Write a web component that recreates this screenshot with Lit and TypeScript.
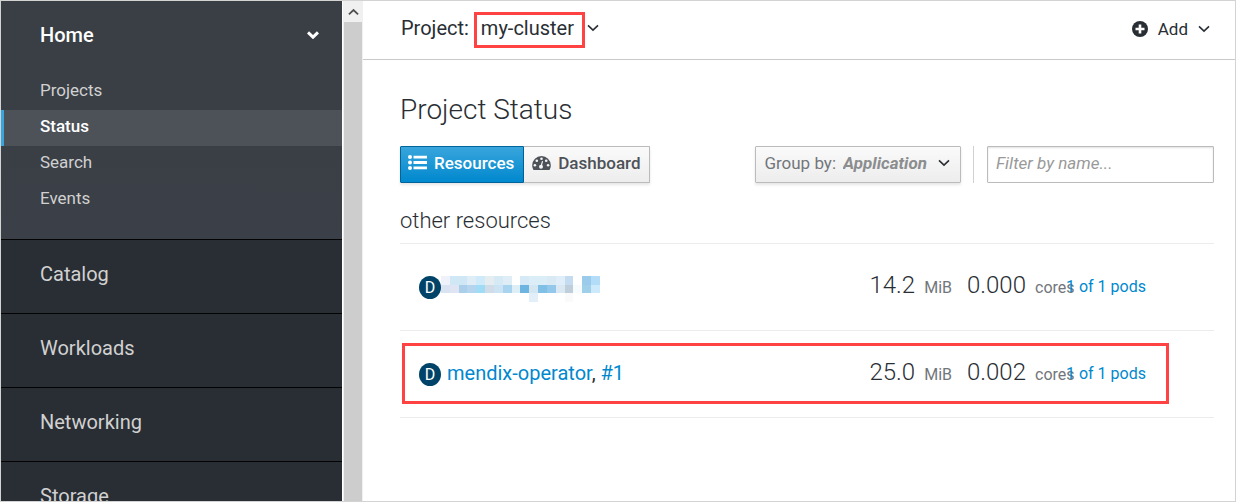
import { LitElement, html, svg, css, nothing } from "lit";
import { customElement, property } from "lit/decorators.js";

const chevron = (cls = "") => html`
  <svg class="chev ${cls}" viewBox="0 0 12 8" aria-hidden="true">
    <path d="M1 1.4 6 6.2 11 1.4" fill="none" stroke="currentColor" />
  </svg>
`;

interface Deployment {
  name: string | null;
  version: string;
  memory: string;
  cores: string;
  highlighted: boolean;
}

const deployments: Deployment[] = [
  { name: null, version: "", memory: "14.2", cores: "0.000", highlighted: false },
  { name: "mendix-operator", version: "#1", memory: "25.0", cores: "0.002", highlighted: true },
];

const mosaicEdges = [0, 9, 18, 26, 35, 44, 53, 62, 71, 79, 88, 97, 106, 115, 124, 132, 141, 150, 159];
const mosaicRows: { y: number; h: number; colors: string[] }[] = [
  {
    y: 0,
    h: 9,
    colors: [
      "#eff2fa", "#d0e8f5", "#d0e8f5", "#dfedf6", "#cfeaf8", "#e5edf0", "#d6eaf6", "#dfedf7", "",
      "#d5e9f7", "#dbeef8", "#dbeef8", "#d9eaf5", "#dfeef8", "#c4dbf0", "", "#9bcbeb", "#b3dcf8",
    ],
  },
  {
    y: 9,
    h: 8,
    colors: [
      "#dae3f2", "#e0e5f4", "#abcfe8", "#b5d5ee", "#a0dcf5", "#d0dce8", "#cbe3f2", "#a9d4ef", "#deeef7",
      "#6db5e0", "#d4e6f1", "#80c0e7", "#93c8ea", "#dae8f3", "#c0cedb", "#f6fbfe", "#a0cfea", "#cde9fc",
    ],
  },
  {
    y: 17,
    h: 9,
    colors: ["", "", "", "", "", "", "", "", "", "", "#e2eff9", "", "", "", "#fafafa", "", "", ""],
  },
];

@customElement("side-nav")
export class SideNav extends LitElement {
  static styles = css`
    :host {
      display: flex;
      min-height: 0;
      overflow: hidden;
      font-family: Roboto, "Liberation Sans", sans-serif;
    }
    .nav {
      flex: 1;
      background: #292e34;
      color: #d1d1d1;
    }
    .group {
      border-bottom: 1px solid #030303;
    }
    .group.open {
      background: linear-gradient(#393f44, #3b3f47);
      padding-bottom: 21px;
    }
    .head {
      display: flex;
      align-items: center;
      justify-content: space-between;
      box-sizing: border-box;
      width: 100%;
      min-height: 73px;
      padding: 0 23px 5px 39px;
      border: 0;
      background: none;
      color: inherit;
      font: 400 20px/24px Roboto, "Liberation Sans", sans-serif;
      text-align: left;
    }
    .group.open .head {
      color: #fff;
      font-weight: 500;
    }
    .chev {
      width: 12px;
      height: 8px;
      stroke-width: 3;
    }
    .list {
      margin: 0;
      padding: 0;
      list-style: none;
    }
    .link {
      display: block;
      padding: 4px 16px 8px 36px;
      border-left: 3px solid transparent;
      color: #d1d1d1;
      font-size: 17px;
      line-height: 24px;
      text-decoration: none;
    }
    .link.active {
      background: #4d5258;
      border-left-color: #39a5dc;
      color: #fff;
      font-weight: 500;
    }
    .scroll {
      display: flex;
      flex-direction: column;
      width: 18px;
      padding: 0 1px;
      background: #f0f0f0;
      border-left: 1px solid #fff;
    }
    .up {
      display: flex;
      align-items: center;
      justify-content: center;
      height: 21px;
      color: #505050;
    }
    .up .chev {
      width: 11px;
      stroke-width: 2;
      transform: rotate(180deg);
    }
    .thumb {
      flex: 1;
      background: #cdcdcd;
    }
  `;

  render() {
    return html`
      <nav class="nav" aria-label="Main">
        <div class="group open">
          <button class="head" type="button" aria-expanded="true">Home ${chevron()}</button>
          <ul class="list">
            ${["Projects", "Status", "Search", "Events"].map(
              (item) => html`<li><a class="link ${item === "Status" ? "active" : ""}" href="#">${item}</a></li>`,
            )}
          </ul>
        </div>
        ${["Catalog", "Workloads", "Networking", "Storage"].map(
          (item) => html`<div class="group"><button class="head" type="button">${item}</button></div>`,
        )}
      </nav>
      <div class="scroll" aria-hidden="true">
        <div class="up">${chevron()}</div>
        <div class="thumb"></div>
      </div>
    `;
  }
}

@customElement("resource-row")
export class ResourceRow extends LitElement {
  @property({ attribute: false }) item!: Deployment;

  static styles = css`
    :host {
      display: block;
      border-bottom: 1px solid #ececec;
      font-family: Roboto, "Liberation Sans", sans-serif;
    }
    .row {
      position: relative;
      display: flex;
      align-items: center;
      min-height: 84px;
      padding: 0 70px 2px 19px;
      color: #292e34;
    }
    .frame {
      position: absolute;
      inset: 12px 45px 13px 2px;
      border: 3px solid #ff4343;
      pointer-events: none;
    }
    .badge {
      display: flex;
      align-items: center;
      justify-content: center;
      width: 22px;
      height: 23px;
      margin-top: 3px;
      border-radius: 50%;
      background: #004368;
      color: #fff;
      font-size: 16px;
      line-height: 24px;
    }
    .name {
      flex: 1;
      padding-left: 6px;
      font-size: 20px;
      line-height: 24px;
    }
    .mosaic-wrap {
      flex: 1;
      display: flex;
    }
    .mosaic {
      width: 159px;
      height: 26px;
      margin-top: 6px;
    }
    .link {
      color: #0088ce;
      text-decoration: none;
    }
    .metric {
      display: flex;
      align-items: baseline;
      gap: 9px;
      margin-right: 15px;
      padding-bottom: 2px;
      white-space: nowrap;
    }
    .cpu {
      width: 99px;
      margin-right: 0;
    }
    .value {
      font-size: 24px;
      line-height: 28px;
      font-weight: 300;
    }
    .unit {
      color: #72767b;
      font-size: 16px;
    }
    .pods {
      width: 78px;
      padding-top: 2px;
      font-size: 16px;
      line-height: 24px;
      text-align: right;
      white-space: nowrap;
    }
  `;

  render() {
    const d = this.item;
    return html`
      <div class="row">
        <span class="badge">D</span>
        ${d.name
          ? html`<span class="name"><a class="link" href="#">${d.name}</a>, <a class="link" href="#">${d.version}</a></span>`
          : html`<span class="mosaic-wrap">
              <svg class="mosaic" viewBox="0 0 159 26" shape-rendering="crispEdges" aria-hidden="true">
                ${mosaicRows.map((r) =>
                  r.colors.map((c, i) =>
                    c
                      ? svg`<rect x=${mosaicEdges[i]} y=${r.y} width=${mosaicEdges[i + 1] - mosaicEdges[i]} height=${r.h} fill=${c} />`
                      : nothing,
                  ),
                )}
              </svg>
            </span>`}
        <span class="metric"><span class="value">${d.memory}</span><span class="unit">MiB</span></span>
        <span class="metric cpu"><span class="value">${d.cores}</span><span class="unit">cores</span></span>
        <a class="link pods" href="#">1 of 1 pods</a>
        ${d.highlighted ? html`<span class="frame"></span>` : nothing}
      </div>
    `;
  }
}

@customElement("app-root")
export class AppRoot extends LitElement {
  static styles = css`
    :host {
      display: grid;
      grid-template-columns: 362px minmax(0, 1fr);
      box-sizing: border-box;
      height: 100vh;
      overflow: hidden;
      border: 1px solid #d3d3d3;
      background: #fff;
      color: #292e34;
      font-family: Roboto, "Liberation Sans", sans-serif;
    }
    .bar {
      display: flex;
      align-items: center;
      justify-content: space-between;
      min-height: 54px;
      padding: 0 25px 4px 38px;
      border-bottom: 1px solid #c9c9c9;
    }
    .project {
      display: flex;
      align-items: center;
      font-size: 20px;
      line-height: 24px;
    }
    .picker {
      position: relative;
      display: flex;
      align-items: center;
      gap: 12px;
      margin-left: 12px;
    }
    .mark {
      position: absolute;
      inset: -4px 14px -8px -7px;
      border: 3px solid #ff4343;
      pointer-events: none;
    }
    .select {
      appearance: none;
      margin: 0;
      padding: 0;
      border: 0;
      background: none;
      color: inherit;
      font: inherit;
    }
    .chev {
      width: 12px;
      height: 8px;
      color: #292e34;
      stroke-width: 1.6;
    }
    .add {
      display: flex;
      align-items: center;
      gap: 10px;
      padding: 2px 0 0;
      border: 0;
      background: none;
      color: #292e34;
      font: 400 17px/24px Roboto, "Liberation Sans", sans-serif;
    }
    .plus {
      width: 16px;
      height: 16px;
    }
    .content {
      padding: 32px 21px 0 37px;
    }
    .title {
      margin: 0;
      font-size: 28px;
      font-weight: 300;
      line-height: 36px;
    }
    .tools {
      display: flex;
      justify-content: space-between;
      margin-top: 18px;
    }
    .toggle,
    .filters {
      display: flex;
    }
    .btn {
      display: flex;
      align-items: center;
      gap: 7px;
      box-sizing: border-box;
      height: 37px;
      padding: 0 8px 3px;
      border: 1px solid #bbb;
      background: linear-gradient(#fafafa, #ededed);
      box-shadow: 0 2px 3px rgba(3, 3, 3, 0.1);
      color: #4d5258;
      font: 500 17px/24px Roboto, "Liberation Sans", sans-serif;
    }
    .btn.primary {
      padding-left: 7px;
      padding-right: 9px;
      border-color: #00659c;
      border-radius: 1px 0 0 1px;
      background: linear-gradient(#39a5dc, #0088ce);
      color: #fff;
    }
    .btn.second {
      border-left: 0;
      border-radius: 0 1px 1px 0;
    }
    .list-icon,
    .gauge {
      width: 19px;
      height: 16px;
    }
    .group {
      border-radius: 1px;
      color: #72767b;
      font-weight: 400;
    }
    .group .select {
      color: #8b8d8f;
      font-style: italic;
      font-weight: 700;
    }
    .group .chev {
      margin-left: 4px;
      margin-right: 2px;
    }
    .rule {
      width: 1px;
      margin: 0 13px 0 12px;
      background: #d1d1d1;
    }
    .filter {
      box-sizing: border-box;
      width: 227px;
      height: 37px;
      padding: 0 8px 3px;
      border: 1px solid #bbb;
      border-radius: 1px;
      box-shadow: inset 0 1px 2px rgba(3, 3, 3, 0.12);
      font: 400 17px/24px Roboto, "Liberation Sans", sans-serif;
    }
    .filter::placeholder {
      color: #999;
      font-style: italic;
      opacity: 1;
    }
    .sub {
      margin: 23px 0 0;
      padding-bottom: 7px;
      border-bottom: 1px solid #ececec;
      font-size: 22px;
      font-weight: 300;
      line-height: 30px;
    }
  `;

  render() {
    return html`
      <side-nav></side-nav>
      <main class="main">
        <header class="bar">
          <div class="project">
            <label for="project">Project:</label>
            <span class="picker">
              <select class="select" id="project"><option>my-cluster</option></select>
              ${chevron()}
              <span class="mark"></span>
            </span>
          </div>
          <button class="add" type="button">
            <svg class="plus" viewBox="0 0 16 16" aria-hidden="true">
              <circle cx="8" cy="8" r="8" fill="#292e34" />
              <path d="M8 3.5v9M3.5 8h9" stroke="#fff" stroke-width="2.6" />
            </svg>
            Add ${chevron()}
          </button>
        </header>
        <section class="content">
          <h1 class="title">Project Status</h1>
          <div class="tools">
            <div class="toggle">
              <button class="btn primary" type="button">
                <svg class="list-icon" viewBox="0 0 19 16" fill="currentColor" aria-hidden="true">
                  <circle cx="2" cy="2" r="2" /><circle cx="2" cy="7.5" r="2" /><circle cx="2" cy="13" r="2" />
                  <path d="M5.5.8H19v2.8H5.5zM5.5 6.1H19v2.8H5.5zM5.5 11.4H19v2.8H5.5z" />
                </svg>
                Resources
              </button>
              <button class="btn second" type="button">
                <svg class="gauge" viewBox="0 0 19 16" aria-hidden="true">
                  <path d="M9.5 1A9.3 9.3 0 0 0 .2 10.3c0 1.7.5 3.3 1.3 4.7h16c.8-1.4 1.300-3 1.300-4.700A9.300 9.300 0 0 0 9.500 1z" fill="currentColor" />
                  <g fill="#f4f4f4">
                    <circle cx="2.9" cy="10.3" r="1.3" /><circle cx="4.8" cy="5.7" r="1.3" />
                    <circle cx="9.5" cy="3.7" r="1.3" /><circle cx="14.2" cy="5.7" r="1.3" />
                    <circle cx="16.1" cy="10.3" r="1.3" /><circle cx="9" cy="11.8" r="2" />
                  </g>
                  <path d="M9 11.8 10.5 6.2" stroke="#f4f4f4" stroke-width="1.2" />
                </svg>
                Dashboard
              </button>
            </div>
            <div class="filters">
              <div class="btn group">
                <label for="group-by">Group by:</label>
                <select class="select" id="group-by"><option>Application</option></select>
                ${chevron()}
              </div>
              <span class="rule"></span>
              <input class="filter" type="text" placeholder="Filter by name..." aria-label="Filter by name" />
            </div>
          </div>
          <h2 class="sub">other resources</h2>
          ${deployments.map((d) => html`<resource-row .item=${d}></resource-row>`)}
        </section>
      </main>
    `;
  }
}
